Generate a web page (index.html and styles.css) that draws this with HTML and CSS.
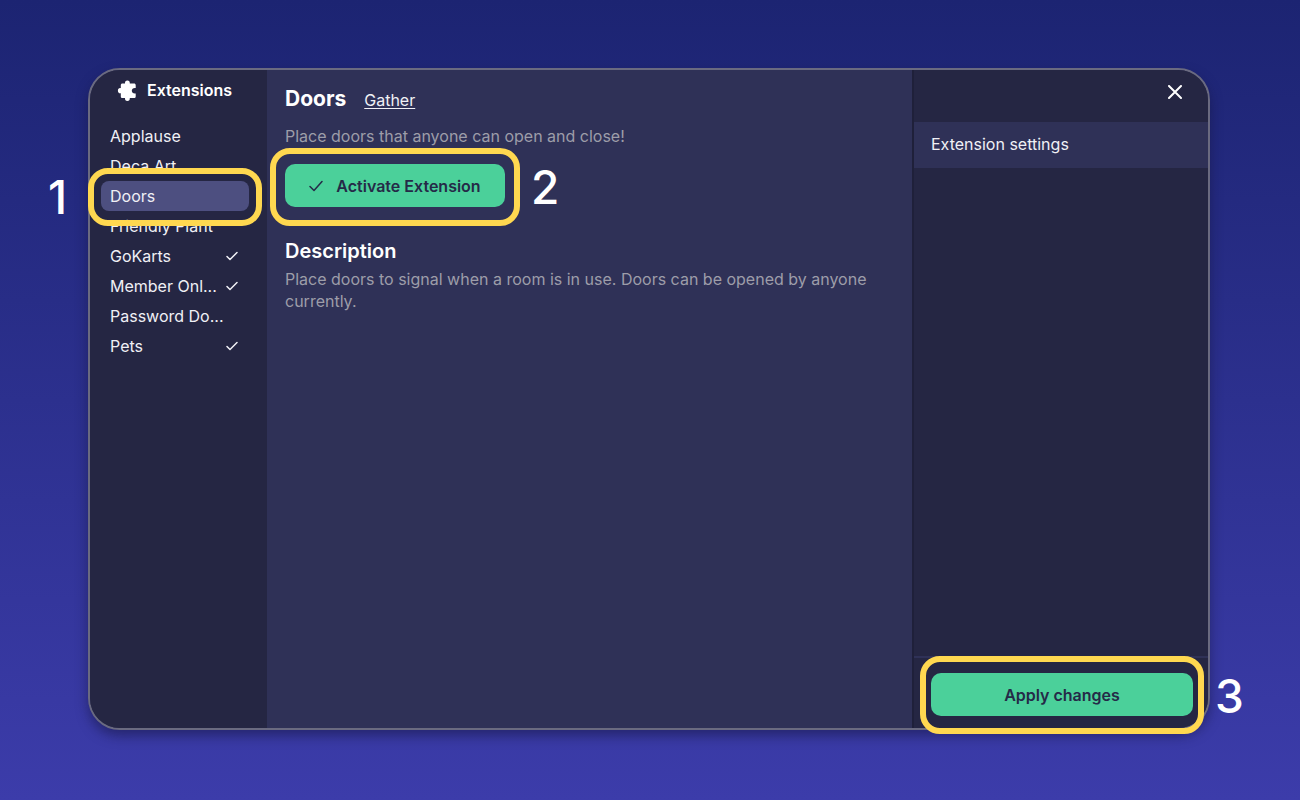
FILE: index.html
```html
<!DOCTYPE html>
<html lang="en">
<head>
    <meta charset="UTF-8">
    <meta name="viewport" content="width=device-width, initial-scale=1.0">
    <title>Extensions</title>
    <link rel="stylesheet" href="styles.css">
</head>
<body>
    <div class="modal">
        <nav class="sidebar">
            <h1 class="sidebar-title">
                <svg class="puzzle" viewBox="0 0 20 22" aria-hidden="true">
                    <path d="M5.500 4.500H8C7.800 2.600 8.700 1.600 10.400 1.600s2.600 1 2.400 2.900H17c1 0 1.700.7 1.700 1.700V9c-2.400-.4-3.900.9-3.900 2.700s1.500 3.100 3.900 2.700v3c0 1-.7 1.700-1.700 1.700H12.800c.2 1.900-.7 2.900-2.400 2.900s-2.600-1-2.400-2.900H5.500c-1 0-1.700-.7-1.700-1.700V14.200C2 14.600.9 13.400.9 11.700S2 8.800 3.800 9.200V6.200c0-1 .7-1.700 1.700-1.700z"/>
                </svg>
                Extensions
            </h1>
            <ul class="ext-list">
                <li><a href="#" class="ext">Applause</a></li>
                <li><a href="#" class="ext">Deca Art</a></li>
                <li class="step step-select">
                    <a href="#" class="ext active">Doors</a>
                    <span class="step-number">1</span>
                </li>
                <li><a href="#" class="ext">Friendly Plant</a></li>
                <li><a href="#" class="ext">GoKarts<svg class="check" viewBox="0 0 12 10"><path d="M1 5.500l3 3L11 1.500"/></svg></a></li>
                <li><a href="#" class="ext">Member Onl...<svg class="check" viewBox="0 0 12 10"><path d="M1 5.500l3 3L11 1.500"/></svg></a></li>
                <li><a href="#" class="ext">Password Do...</a></li>
                <li><a href="#" class="ext">Pets<svg class="check" viewBox="0 0 12 10"><path d="M1 5.500l3 3L11 1.500"/></svg></a></li>
            </ul>
        </nav>

        <main class="details">
            <div class="details-header">
                <h2>Doors</h2>
                <a href="#" class="author">Gather</a>
            </div>
            <p class="summary">Place doors that anyone can open and close!</p>
            <div class="step step-activate">
                <button type="button" class="btn btn-activate">
                    <svg class="btn-check" viewBox="0 0 14 12" aria-hidden="true"><path d="M1 6.500l4 4L13 1.500"/></svg>
                    Activate Extension
                </button>
                <span class="step-number">2</span>
            </div>
            <h3>Description</h3>
            <p class="description">Place doors to signal when a room is in use. Doors can be opened by anyone currently.</p>
        </main>

        <aside class="settings">
            <div class="settings-header">
                <button type="button" class="close" aria-label="Close">
                    <svg viewBox="0 0 14 14"><path d="M1 1l12 12M13 1L1 13"/></svg>
                </button>
            </div>
            <h4 class="settings-title">Extension settings</h4>
            <div class="settings-footer">
                <div class="step step-apply">
                    <button type="button" class="btn btn-apply">Apply changes</button>
                    <span class="step-number">3</span>
                </div>
            </div>
        </aside>
    </div>
</body>
</html>
```
FILE: styles.css
```css
* {
    box-sizing: border-box;
}
body {
    margin: 0;
    min-height: 100vh;
    padding: 68px 90px 70px 88px;
    display: flex;
    background: linear-gradient(#1c2472, #3c3caa);
    font-family: Inter, "Liberation Sans", sans-serif;
    font-size: 16px;
    line-height: 22px;
    color: #f0f0f5;
}
h1, h2, h3, h4, p, ul {
    margin: 0;
    padding: 0;
}
a {
    color: inherit;
}
button {
    font-family: inherit;
    cursor: pointer;
}
svg {
    flex: none;
    fill: none;
    stroke: currentColor;
    stroke-linecap: round;
    stroke-linejoin: round;
}
.modal {
    flex: 1;
    display: flex;
    border: 2px solid #6a6a80;
    border-radius: 32px;
    background-color: #2f3157;
    box-shadow: 0 6px 12px rgba(20, 20, 60, 0.5);
}

/* left column */
.sidebar {
    width: 177px;
    flex: none;
    padding: 9px 18px 0 11px;
    background-color: #252643;
    border-radius: 30px 0 0 30px;
}
.sidebar-title {
    display: flex;
    align-items: center;
    gap: 10px;
    padding-left: 16px;
    margin-bottom: 20px;
    font-size: 16px;
    line-height: 22px;
    font-weight: 600;
    color: #fff;
}
.puzzle {
    width: 20px;
    height: 22px;
    fill: #fff;
    stroke: none;
}
.ext-list {
    list-style: none;
}
.ext {
    display: flex;
    align-items: center;
    justify-content: space-between;
    height: 30px;
    padding: 0 11px 0 9px;
    border-radius: 8px;
    text-decoration: none;
    white-space: nowrap;
}
.ext.active {
    background-color: #4d4f80;
}
.check {
    width: 12px;
    height: 10px;
    stroke-width: 1.5;
}

/* middle column */
.details {
    flex: 1;
    padding: 16px 18px;
}
.details-header {
    display: flex;
    align-items: baseline;
    gap: 18px;
    margin-bottom: 13px;
}
h2 {
    font-size: 21px;
    line-height: 26px;
    font-weight: 700;
    color: #fff;
}
.author {
    text-underline-offset: 2px;
}
.summary, .description {
    color: #9d9da9;
}
.summary {
    margin-bottom: 17px;
}
h3 {
    margin-top: 31px;
    margin-bottom: 4px;
    font-size: 20px;
    line-height: 26px;
    font-weight: 600;
    color: #fff;
}
.btn {
    display: flex;
    align-items: center;
    justify-content: center;
    height: 43px;
    border: none;
    border-radius: 10px;
    background-color: #4bd09a;
    color: #252a48;
    font-size: 16px;
    font-weight: 600;
}
.btn-activate {
    gap: 13px;
    width: 220px;
    padding: 0;
}
.btn-check {
    width: 14px;
    height: 12px;
    stroke-width: 1.5;
}
.btn-apply {
    width: 100%;
}

/* right column */
.settings {
    width: 296px;
    flex: none;
    display: flex;
    flex-direction: column;
    border-left: 2px solid #1f203a;
    background-color: #252643;
    border-radius: 0 30px 30px 0;
}
.settings-header {
    display: flex;
    justify-content: flex-end;
    height: 52px;
    padding: 10px 21px;
}
.close {
    display: flex;
    align-items: center;
    justify-content: center;
    width: 24px;
    height: 24px;
    padding: 0;
    border: none;
    background: none;
    color: #fff;
}
.close svg {
    width: 14px;
    height: 14px;
    stroke-width: 2;
}
.settings-title {
    padding: 11px 17px 13px;
    background-color: #2f3157;
    font-size: 16px;
    font-weight: 400;
}
.settings-footer {
    margin-top: auto;
    padding: 15px 15px 12px 17px;
    border-top: 2px solid #2f3157;
}

/* numbered highlights */
.step {
    position: relative;
    width: fit-content;
}
.step-select, .step-apply {
    width: auto;
}
.step::after {
    content: "";
    position: absolute;
    border: 6px solid #ffd850;
    border-radius: 20px;
    pointer-events: none;
}
.step-select::after {
    inset: -13px -13px -15px;
}
.step-activate::after {
    inset: -16px -15px -19px;
}
.step-apply::after {
    inset: -17px -11px -18px;
}
.step-number {
    position: absolute;
    top: 50%;
    padding-top: 2px;
    font-size: 46px;
    line-height: 48px;
    font-weight: 500;
    color: #fff;
    transform: translateY(-50%);
}
.step-select .step-number {
    right: calc(100% + 34px);
}
.step-activate .step-number {
    left: calc(100% + 26px);
}
.step-apply .step-number {
    left: calc(100% + 22px);
}
```
